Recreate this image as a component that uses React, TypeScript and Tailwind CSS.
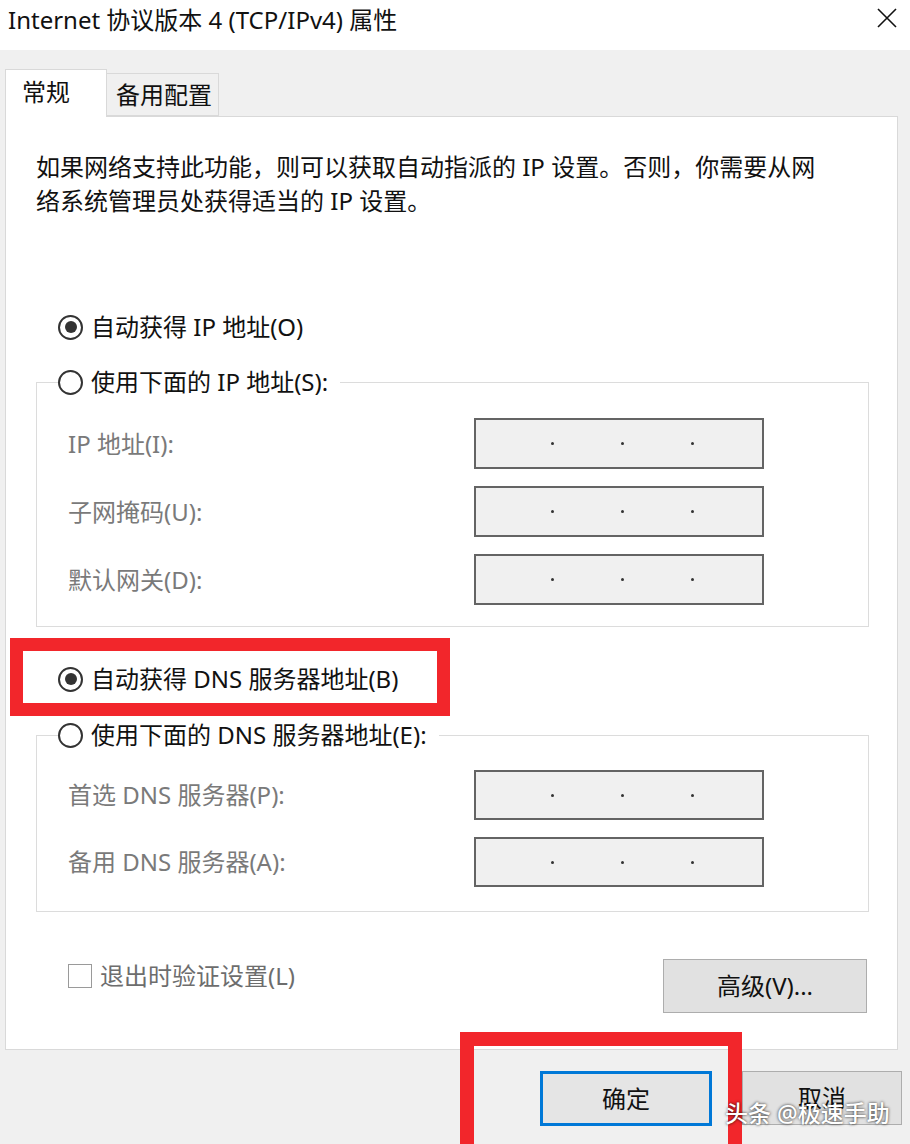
import React from "react";

const Radio: React.FC<{ checked?: boolean; label: string }> = ({ checked, label }) => {
  return (
    <div className="flex items-center gap-[8px] h-[34px]">
      <span className="w-[25px] h-[25px] rounded-full border-2 border-[#333] bg-white flex items-center justify-center flex-none">
        {checked && <span className="w-[12px] h-[12px] rounded-full bg-[#333]"></span>}
      </span>
      <span className="text-[24px] leading-[34px] text-[#111] whitespace-nowrap">{label}</span>
    </div>
  );
};

const IpBox: React.FC<{ h?: string }> = ({ h = "h-[51px]" }) => {
  return (
    <div className={`w-[290px] ${h} flex-none border-2 border-[#646464] bg-[#f0f0f0] flex items-center pl-[75px] gap-[67px]`}>
      <span className="w-[3px] h-[3px] rounded-full bg-[#333]"></span>
      <span className="w-[3px] h-[3px] rounded-full bg-[#333]"></span>
      <span className="w-[3px] h-[3px] rounded-full bg-[#333]"></span>
    </div>
  );
};

const FieldRow: React.FC<{ label: string; h?: string }> = ({ label, h }) => {
  return (
    <div className="flex items-center">
      <span className="w-[406px] flex-none text-[24px] leading-[34px] text-[#7a7a7a] whitespace-nowrap">{label}</span>
      <IpBox h={h} />
    </div>
  );
};

const App: React.FC = () => {
  return (
    <div className="relative w-[910px] h-[1144px] overflow-hidden bg-[#f0f0f0] font-['Noto_Sans','Noto_Sans_CJK_SC',sans-serif]">
      {/* title bar */}
      <div className="h-[50px] bg-white flex items-start justify-between pt-[4px] pl-[8px] pr-[13px]">
        <span className="text-[24px] leading-[32px] text-[#111] whitespace-nowrap">Internet 协议版本 4 (TCP/IPv4) 属性</span>
        <svg className="mt-[4px]" width="20" height="20" viewBox="0 0 20 20" fill="none" stroke="#111" strokeWidth="1.6">
          <path d="M1 1L19 19M19 1L1 19" />
        </svg>
      </div>

      {/* tabs */}
      <div className="h-[66px] flex items-end pl-[5px]">
        <div className="relative z-10 -mb-px w-[102px] h-[48px] border border-b-0 border-[#d9d9d9] bg-white pl-[16px] pt-[6px] text-[24px] leading-[32px] text-[#111]">
          常规
        </div>
        <div className="w-[112px] h-[43px] border border-l-0 border-[#d9d9d9] bg-[#f0f0f0] pl-[9px] pt-[5px] text-[24px] leading-[32px] text-[#111]">
          备用配置
        </div>
      </div>

      {/* panel */}
      <div className="ml-[5px] w-[893px] h-[934px] border border-[#d9d9d9] bg-white">
        <p className="pt-[33px] pl-[30px] text-[24px] leading-[34px] text-[#111] whitespace-nowrap">
          如果网络支持此功能，则可以获取自动指派的 IP 设置。否则，你需要从网
          <br />
          络系统管理员处获得适当的 IP 设置。
        </p>

        <div className="pl-[30px] pr-[28px]">
          <div className="mt-[92px] pl-[22px]">
            <Radio checked label="自动获得 IP 地址(O)" />
          </div>

          <fieldset className="mt-[21px] border border-[#dcdcdc]">
            <legend className="ml-[21px] pr-[12px]">
              <Radio label="使用下面的 IP 地址(S):" />
            </legend>
            <div className="pt-[19px] pb-[21px] pl-[31px] flex flex-col gap-[17px]">
              <FieldRow label="IP 地址(I):" />
              <FieldRow label="子网掩码(U):" />
              <FieldRow label="默认网关(D):" />
            </div>
          </fieldset>

          <div className="mt-[35px] pl-[22px]">
            <Radio checked label="自动获得 DNS 服务器地址(B)" />
          </div>

          <fieldset className="mt-[22px] border border-[#dcdcdc]">
            <legend className="ml-[21px] pr-[12px]">
              <Radio label="使用下面的 DNS 服务器地址(E):" />
            </legend>
            <div className="pt-[18px] pb-[24px] pl-[31px] flex flex-col gap-[17px]">
              <FieldRow label="首选 DNS 服务器(P):" h="h-[50px]" />
              <FieldRow label="备用 DNS 服务器(A):" h="h-[50px]" />
            </div>
          </fieldset>

          <div className="mt-[47px] flex items-start justify-between">
            <div className="mt-[5px] pl-[32px] flex items-center gap-[8px]">
              <span className="w-[24px] h-[24px] border border-[#9a9a9a] bg-white"></span>
              <span className="text-[24px] leading-[24px] text-[#6d6d6d] whitespace-nowrap">退出时验证设置(L)</span>
            </div>
            <button className="mr-[2px] w-[204px] h-[54px] border border-[#adadad] bg-[#e1e1e1] text-[24px] text-[#111]">
              高级(V)...
            </button>
          </div>
        </div>
      </div>

      {/* dialog buttons */}
      <div className="mt-[21px] flex justify-end gap-[30px] pr-[8px]">
        <button className="w-[172px] h-[55px] border-[3px] border-[#0078d7] bg-[#e5e5e5] text-[24px] text-[#111]">确定</button>
        <button className="w-[160px] h-[54px] border border-[#adadad] bg-[#e1e1e1] text-[24px] text-[#111]">取消</button>
      </div>

      {/* red annotation frames */}
      <div className="absolute left-[10px] top-[638px] w-[440px] h-[78px] border-[13px] border-[#f2262b]"></div>
      <div className="absolute left-[460px] top-[1032px] w-[282px] h-[130px] border-[14px] border-[#f2262b]"></div>

      {/* watermark */}
      <div className="absolute left-[725px] top-[1096px] text-[23px] leading-[34px] font-medium text-white whitespace-nowrap [text-shadow:0_0_3px_rgba(0,0,0,0.9)]">
        头条 @极速手助
      </div>
    </div>
  );
};

export default App;
